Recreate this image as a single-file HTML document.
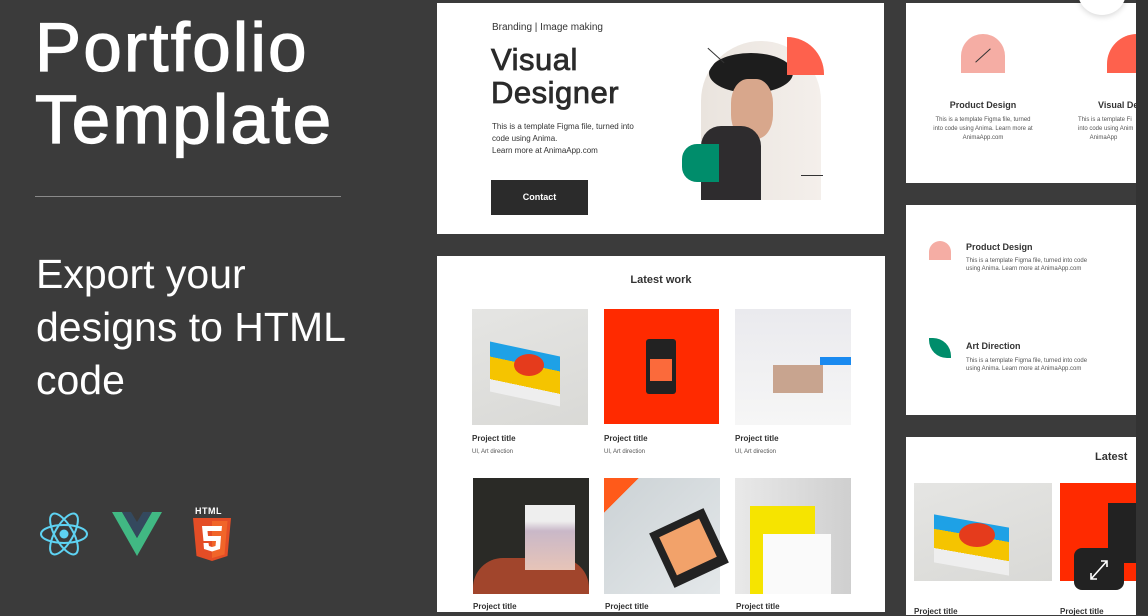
<!DOCTYPE html>
<html><head><meta charset="utf-8"><style>
*{margin:0;padding:0;box-sizing:border-box}
body{width:1148px;height:615px;background:#3b3b3b;position:relative;overflow:hidden;font-family:"Liberation Sans",sans-serif;color:#2a2a2a}
.a{position:absolute}
.card{position:absolute;background:#fff}
.t{font-size:7px;color:#555;line-height:10px}
.pt{font-size:8px;font-weight:bold;color:#333}
.ps{font-size:6px;color:#555}
</style></head><body>
<div class="a" style="left:35px;top:12px;color:#fff;font-size:69px;line-height:72px;letter-spacing:2.3px;-webkit-text-stroke:1.3px #fff">Portfolio<br>Template</div>
<div class="a" style="left:35px;top:196px;width:306px;height:1px;background:#8a8a8a"></div>
<div class="a" style="left:36px;top:248px;color:#fff;font-size:41px;line-height:53px">Export your<br>designs to HTML<br>code</div>
<!-- react -->
<svg class="a" style="left:38px;top:510px" width="52" height="48" viewBox="0 0 52 48"><g fill="none" stroke="#5ed3f3" stroke-width="2"><ellipse cx="26" cy="24" rx="23" ry="9"/><ellipse cx="26" cy="24" rx="23" ry="9" transform="rotate(60 26 24)"/><ellipse cx="26" cy="24" rx="23" ry="9" transform="rotate(-60 26 24)"/></g><circle cx="26" cy="24" r="4.5" fill="#5ed3f3"/></svg>
<!-- vue -->
<svg class="a" style="left:112px;top:512px" width="50" height="44" viewBox="0 0 50 44"><path d="M0 0H10L25 26 40 0H50L25 44Z" fill="#41b883"/><path d="M10 0H19L25 10 31 0H40L25 26Z" fill="#34495e"/></svg>
<!-- html5 -->
<div class="a" style="left:195px;top:506px;color:#fff;font-size:9px;font-weight:bold;letter-spacing:0.5px">HTML</div>
<svg class="a" style="left:193px;top:518px" width="38" height="43" viewBox="0 0 38 43"><path d="M0 0H38L34.5 38 19 43 3.5 38Z" fill="#e44d26"/><path d="M19 3V40L31.5 36.5 34.5 3Z" fill="#f16529"/><path d="M9 8H29L28.5 13H14.5L15 18H28L27 31 19 33.5 11 31 10.5 25H15.5L16 28 19 29 22.5 28 23 23H10.5Z" fill="#fff"/></svg>

<!-- hero card -->
<div class="card" style="left:437px;top:3px;width:447px;height:231px">
 <div class="a" style="left:55px;top:19px;font-size:10px;color:#333">Branding | Image making</div>
 <div class="a" style="left:54px;top:40px;font-size:31px;line-height:33px;color:#2a2a2a;-webkit-text-stroke:0.8px #2a2a2a;letter-spacing:0.5px">Visual<br>Designer</div>
 <div class="a t" style="left:55px;top:118px;font-size:8px;line-height:12px;color:#333">This is a template Figma file, turned into<br>code using Anima.<br>Learn more at AnimaApp.com</div>
 <div class="a" style="left:54px;top:177px;width:97px;height:35px;background:#2b2b2b;color:#fff;font-size:9px;font-weight:bold;text-align:center;line-height:35px">Contact</div>
 <div class="a" style="left:264px;top:38px;width:120px;height:159px;border-radius:60px 60px 0 0;background:linear-gradient(90deg,#eae4de,#f4efeb);overflow:hidden">
  <div class="a" style="left:8px;top:12px;width:84px;height:40px;border-radius:50%;background:#1d1d1d"></div>
  <div class="a" style="left:30px;top:38px;width:42px;height:60px;border-radius:40%;background:#d8a78c"></div>
  <div class="a" style="left:0;top:85px;width:60px;height:80px;border-radius:20px 20px 0 0;background:#2e2c2e"></div>
 </div>
 <div class="a" style="left:350px;top:34px;width:37px;height:38px;background:#fe614d;border-radius:0 37px 0 0"></div>
 <div class="a" style="left:245px;top:141px;width:37px;height:38px;background:#008d6b;border-radius:15px 0 0 15px"></div>
 <div class="a" style="left:268px;top:52px;width:22px;height:1px;background:#333;transform:rotate(42deg)"></div>
 <div class="a" style="left:364px;top:172px;width:22px;height:1px;background:#333"></div>
</div>

<!-- latest work -->
<div class="card" style="left:437px;top:256px;width:448px;height:356px">
 <div class="a" style="left:0;top:18px;width:448px;text-align:center;font-size:11px;font-weight:bold;color:#333">Latest work</div>
 <div class="a" style="left:35px;top:53px;width:116px;height:116px;background:linear-gradient(160deg,#e5e5e3,#d9d9d6)"><div class="a" style="left:18px;top:40px;width:70px;height:50px;background:linear-gradient(#1ea1e6 30%,#f5c400 30%,#f5c400 75%,#eee 75%);transform:skewY(12deg)"></div><div class="a" style="left:42px;top:45px;width:30px;height:22px;border-radius:50%;background:#e53b1c"></div></div>
 <div class="a" style="left:167px;top:53px;width:115px;height:115px;background:#ff2a00"><div class="a" style="left:42px;top:30px;width:30px;height:55px;background:#222;border-radius:3px"></div><div class="a" style="left:46px;top:50px;width:22px;height:22px;background:#fb6a3b"></div></div>
 <div class="a" style="left:298px;top:53px;width:116px;height:116px;background:linear-gradient(#eaeaee,#f6f6f6)"><div class="a" style="left:85px;top:48px;width:31px;height:8px;background:#1a8af0"></div><div class="a" style="left:38px;top:56px;width:50px;height:28px;background:#c8a48f"></div></div>
 <div class="a pt" style="left:35px;top:178px">Project title</div><div class="a ps" style="left:35px;top:193px">UI, Art direction</div>
 <div class="a pt" style="left:167px;top:178px">Project title</div><div class="a ps" style="left:167px;top:193px">UI, Art direction</div>
 <div class="a pt" style="left:298px;top:178px">Project title</div><div class="a ps" style="left:298px;top:193px">UI, Art direction</div>
 <div class="a" style="left:36px;top:222px;width:116px;height:116px;background:#2a2a26"><div class="a" style="left:0;top:80px;width:116px;height:36px;background:#a1452c;border-radius:30px 30px 0 0"></div><div class="a" style="left:52px;top:27px;width:50px;height:65px;background:linear-gradient(#eee 25%,#c9b8c8 40%,#e7c4b8)"></div></div>
 <div class="a" style="left:167px;top:222px;width:116px;height:116px;background:linear-gradient(135deg,#ff5a1a 15%,#cfd5d8 15%,#e4e8ea)"><div class="a" style="left:55px;top:40px;width:60px;height:60px;background:#222;transform:rotate(-25deg)"></div><div class="a" style="left:62px;top:48px;width:44px;height:42px;background:#f2a26a;transform:rotate(-25deg)"></div></div>
 <div class="a" style="left:298px;top:222px;width:116px;height:116px;background:linear-gradient(90deg,#e9e9e9,#cfcfcf)"><div class="a" style="left:15px;top:28px;width:65px;height:88px;background:#f6e400"></div><div class="a" style="left:28px;top:56px;width:68px;height:60px;background:#fafafa"></div></div>
 <div class="a pt" style="left:36px;top:346px">Project title</div>
 <div class="a pt" style="left:168px;top:346px">Project title</div>
 <div class="a pt" style="left:299px;top:346px">Project title</div>
</div>

<!-- right cards -->
<div class="card" style="left:906px;top:3px;width:230px;height:180px">
 <div class="a" style="left:55px;top:31px;width:44px;height:39px;background:#f5ada4;border-radius:22px 22px 0 0"></div>
 <div class="a" style="left:67px;top:52px;width:20px;height:1px;background:#333;transform:rotate(-42deg)"></div>
 <div class="a" style="left:0;top:97px;width:154px;text-align:center;font-size:9px;font-weight:bold;color:#333">Product Design</div>
 <div class="a t" style="left:0;top:113px;width:154px;text-align:center;font-size:6px;line-height:9px">This is a template Figma file, turned<br>into code using Anima. Learn more at<br>AnimaApp.com</div>
 <div class="a" style="left:201px;top:31px;width:30px;height:39px;background:#fe614d;border-radius:30px 0 0 0"></div>
 <div class="a" style="left:192px;top:97px;font-size:9px;font-weight:bold;color:#333;white-space:nowrap">Visual De</div>
 <div class="a t" style="left:172px;top:113px;font-size:6px;line-height:9px;white-space:nowrap">This is a template Fi<br>into code using Anim<br>&nbsp;&nbsp;&nbsp;&nbsp;&nbsp;&nbsp;&nbsp;AnimaApp</div>
</div>
<div class="a" style="left:1078px;top:-30px;width:48px;height:45px;border-radius:50%;background:#fff;box-shadow:0 2px 6px rgba(0,0,0,.15)"></div>
<div class="card" style="left:906px;top:205px;width:230px;height:210px">
 <div class="a" style="left:23px;top:36px;width:22px;height:19px;background:#f5ada4;border-radius:11px 11px 0 0"></div>
 <div class="a" style="left:60px;top:37px;font-size:9px;font-weight:bold;color:#333">Product Design</div>
 <div class="a t" style="left:60px;top:52px;font-size:6px;line-height:8px">This is a template Figma file, turned into code<br>using Anima. Learn more at AnimaApp.com</div>
 <div class="a" style="left:23px;top:133px;width:22px;height:20px;background:#008d6b;border-radius:0 18px 0 18px"></div>
 <div class="a" style="left:60px;top:136px;font-size:9px;font-weight:bold;color:#333">Art Direction</div>
 <div class="a t" style="left:60px;top:152px;font-size:6px;line-height:8px">This is a template Figma file, turned into code<br>using Anima. Learn more at AnimaApp.com</div>
</div>
<div class="card" style="left:906px;top:437px;width:230px;height:178px">
 <div class="a" style="left:189px;top:14px;font-size:11px;font-weight:bold;color:#333;white-space:nowrap">Latest</div>
 <div class="a" style="left:8px;top:46px;width:138px;height:98px;background:linear-gradient(160deg,#e5e5e3,#d9d9d6)"><div class="a" style="left:20px;top:38px;width:75px;height:48px;background:linear-gradient(#1ea1e6 30%,#f5c400 30%,#f5c400 70%,#eee 70%);transform:skewY(10deg)"></div><div class="a" style="left:45px;top:40px;width:36px;height:24px;border-radius:50%;background:#e53b1c"></div></div>
 <div class="a" style="left:154px;top:46px;width:76px;height:98px;background:#ff2a00"><div class="a" style="left:48px;top:20px;width:28px;height:60px;background:#222"></div></div>
 <div class="a pt" style="left:8px;top:170px">Project title</div>
 <div class="a pt" style="left:154px;top:170px">Project title</div>
</div>
<div class="a" style="left:1074px;top:548px;width:50px;height:42px;border-radius:8px;background:#222"><svg width="50" height="42" viewBox="0 0 50 42"><path d="M17 31L33 13M27 13H33V19M17 25V31H23" stroke="#fff" stroke-width="1.6" fill="none"/></svg></div>
<div class="a" style="left:1136px;top:0;width:12px;height:615px;background:#333"></div>
</body></html>
